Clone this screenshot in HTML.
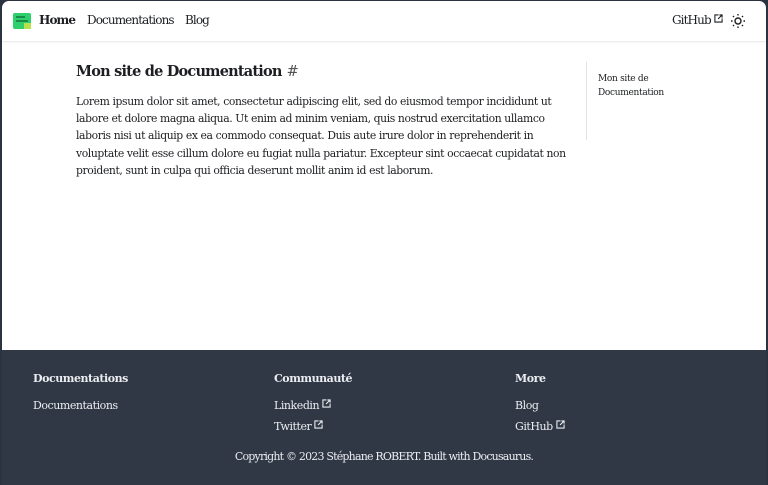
<!DOCTYPE html>
<html><head><meta charset="utf-8"><style>
*{margin:0;padding:0;box-sizing:border-box}
html,body{width:768px;height:485px;overflow:hidden;background:#2b3240}
.win{position:absolute;left:2px;top:1px;width:764px;height:484px;background:#fff;border-radius:7px 7px 0 0;overflow:hidden;font-family:"DejaVu Serif","Liberation Serif",serif;color:#1c1e21}
.nav{position:absolute;left:0;top:0;width:764px;height:40px;box-shadow:0 1px 2px rgba(0,0,0,.1);font-size:12px;letter-spacing:-0.9px}
.nav span{position:absolute;top:12px}
h1{position:absolute;left:74px;top:62px;font-size:14.5px;font-weight:bold;letter-spacing:-0.8px}
h1 i{font-style:normal;font-weight:normal;color:#555;margin-left:5px}
.p{position:absolute;left:74px;top:92px;width:494px;font-size:10.8px;line-height:17.2px;letter-spacing:-0.4px}
.toc{position:absolute;left:584px;top:61px;height:78px;border-left:1px solid #e3e3e3;padding:10px 0 0 11px;font-size:9px;line-height:14px;color:#1c1e21;letter-spacing:-0.3px}
.foot{position:absolute;left:0;top:349px;width:764px;height:140px;background:#303846;color:#ebedf0;font-size:11px;letter-spacing:-0.45px}
.foot span{position:absolute}
.b{font-weight:bold}
.e{vertical-align:1px;margin-left:3px}
</style></head><body><div class="win">
<div class="nav">
<svg style="position:absolute;left:11px;top:11px" width="20" height="18" viewBox="0 0 20 18"><rect x="0" y="1" width="18" height="16" rx="2" fill="#2ed06e"/><rect x="3" y="4" width="9" height="2" fill="#1a8a47"/><rect x="3" y="8" width="12" height="2" fill="#1a8a47"/><rect x="11" y="11" width="7" height="6" fill="#b8e04a"/></svg>
<span class="b" style="left:37px">Home</span>
<span style="left:85px">Documentations</span>
<span style="left:183px">Blog</span>
<span style="left:670px">GitHub<svg class="e" width="9" height="9" viewBox="0 0 10 10"><path d="M5 1H1v8h8V5M6 1h3v3M9 1 4.5 5.5" stroke="#1c1e21" fill="none" stroke-width="1.2"/></svg></span>
<svg style="position:absolute;left:728px;top:12px" width="16" height="16" viewBox="0 0 16 16" stroke="#1c1e21" stroke-width="1.4" fill="none"><circle cx="8" cy="8" r="3"/><path d="M8 1v1.5M8 13.5V15M1 8h1.5M13.5 8H15M3 3l1 1M12 12l1 1M3 13l1-1M12 4l1-1"/></svg>
</div>
<h1>Mon site de Documentation<i>#</i></h1>
<div class="p">Lorem ipsum dolor sit amet, consectetur adipiscing elit, sed do eiusmod tempor incididunt ut labore et dolore magna aliqua. Ut enim ad minim veniam, quis nostrud exercitation ullamco laboris nisi ut aliquip ex ea commodo consequat. Duis aute irure dolor in reprehenderit in voluptate velit esse cillum dolore eu fugiat nulla pariatur. Excepteur sint occaecat cupidatat non proident, sunt in culpa qui officia deserunt mollit anim id est laborum.</div>
<div class="toc">Mon site de<br>Documentation</div>
<div class="foot">
<span class="b" style="left:31px;top:22px">Documentations</span>
<span style="left:31px;top:49px">Documentations</span>
<span class="b" style="left:272px;top:22px">Communauté</span>
<span style="left:272px;top:49px">Linkedin<svg class="e" width="9" height="9" viewBox="0 0 10 10"><path d="M5 1H1v8h8V5M6 1h3v3M9 1 4.5 5.5" stroke="#ebedf0" fill="none" stroke-width="1.2"/></svg></span>
<span style="left:272px;top:70px">Twitter<svg class="e" width="9" height="9" viewBox="0 0 10 10"><path d="M5 1H1v8h8V5M6 1h3v3M9 1 4.5 5.5" stroke="#ebedf0" fill="none" stroke-width="1.2"/></svg></span>
<span class="b" style="left:513px;top:22px">More</span>
<span style="left:513px;top:49px">Blog</span>
<span style="left:513px;top:70px">GitHub<svg class="e" width="9" height="9" viewBox="0 0 10 10"><path d="M5 1H1v8h8V5M6 1h3v3M9 1 4.5 5.5" stroke="#ebedf0" fill="none" stroke-width="1.2"/></svg></span>
<span style="left:0;width:764px;text-align:center;top:100px;letter-spacing:-0.8px">Copyright © 2023 Stéphane ROBERT. Built with Docusaurus.</span>
</div>
</div></body></html>
